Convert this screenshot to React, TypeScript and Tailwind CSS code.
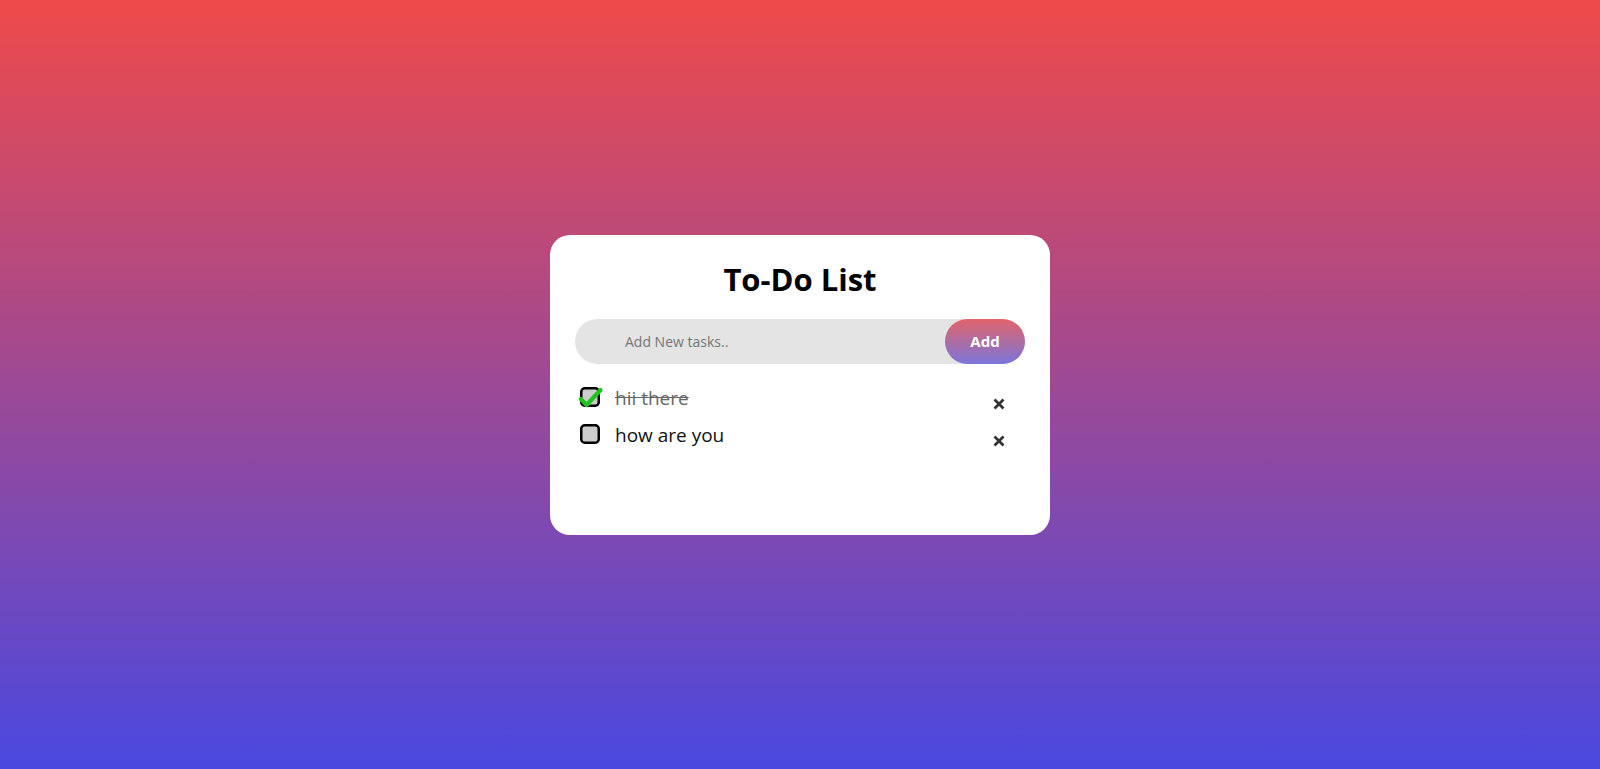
import { useState } from 'react';

type Task = { id: number; text: string; done: boolean };

function CheckBox({ checked }: { checked: boolean }) {
  return (
    <svg width="24" height="22" viewBox="0 0 24 22" className="shrink-0 overflow-visible">
      <rect x="1.25" y="1.25" width="17.5" height="17.5" rx="3.5" fill="#cccccc" stroke="#000" strokeWidth="2.5" />
      {checked && (
        <path d="M0.8 12 L6.5 18 L20.5 3" fill="none" stroke="#1ec31e" strokeWidth="4.2" strokeLinecap="round" strokeLinejoin="round" />
      )}
    </svg>
  );
}

function CloseIcon() {
  return (
    <svg width="12" height="12" viewBox="0 0 12 12">
      <path d="M1.5 1.5 L10.5 10.5 M10.5 1.5 L1.5 10.5" stroke="#333" strokeWidth="2.8" strokeLinecap="butt" />
    </svg>
  );
}

export default function App() {
  const [tasks, setTasks] = useState<Task[]>([
    { id: 1, text: 'hii there', done: true },
    { id: 2, text: 'how are you', done: false },
  ]);

  const toggle = (id: number) =>
    setTasks((t) => t.map((x) => (x.id === id ? { ...x, done: !x.done } : x)));
  const remove = (id: number) => setTasks((t) => t.filter((x) => x.id !== id));

  return (
    <div className="min-h-screen w-full flex items-center justify-center bg-[linear-gradient(to_bottom,#ef4a4a,#4a48e0)] font-['Open_Sans',sans-serif]">
      <div className="w-[500px] h-[300px] bg-white rounded-[20px] px-[25px] pt-[24px]">
        <h2 className="text-center text-[31px] font-bold leading-[40px] text-black">To-Do List</h2>

        <div className="mt-[20px] flex h-[45px] items-center rounded-full bg-[#e4e4e4]">
          <input
            placeholder="Add New tasks.."
            className="flex-1 min-w-0 h-full bg-transparent pl-[50px] pr-4 text-[14px] text-black outline-none placeholder:text-[#757575]"
          />
          <button className="h-full w-[80px] rounded-full bg-[linear-gradient(to_bottom,#e2636a,#7b75da)] text-[15px] font-bold text-white">
            Add
          </button>
        </div>

        <ul className="mt-[16px] pl-[5px] pr-[20px]">
          {tasks.map((t) => (
            <li key={t.id} className="flex h-[37px] items-center" onClick={() => toggle(t.id)}>
              <CheckBox checked={t.done} />
              <span
                className={
                  t.done
                    ? 'ml-[11px] text-[19px] text-[#666] line-through'
                    : 'ml-[11px] text-[19px] text-[#111]'
                }
              >
                {t.text}
              </span>
              <button
                className="ml-auto mt-[12px] flex h-[12px] w-[12px] items-center justify-center"
                onClick={(e) => {
                  e.stopPropagation();
                  remove(t.id);
                }}
              >
                <CloseIcon />
              </button>
            </li>
          ))}
        </ul>
      </div>
    </div>
  );
}
